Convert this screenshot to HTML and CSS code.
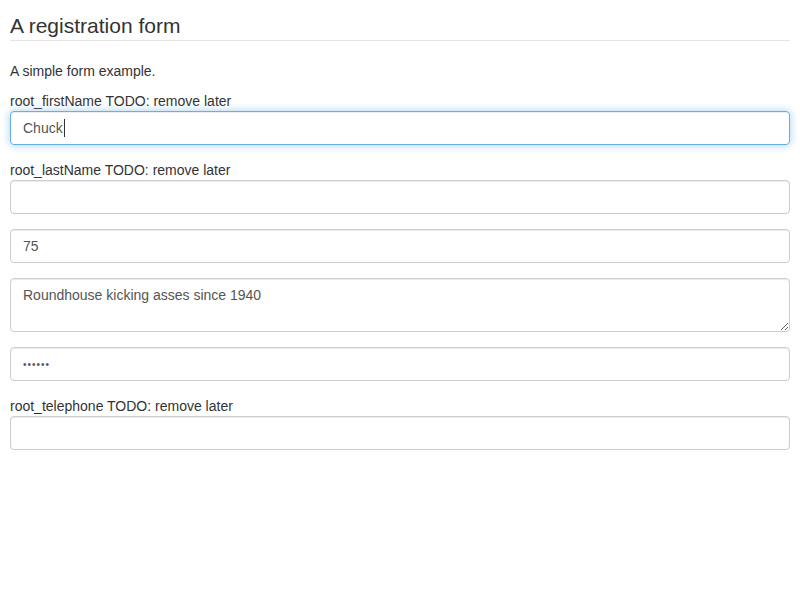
FILE: index.html
```html
<!DOCTYPE html>
<html lang="en">
<head>
<meta charset="utf-8">
<title>A registration form</title>
<link rel="stylesheet" href="styles.css">
</head>
<body>
<form class="form">
  <fieldset class="fieldset">
    <legend class="legend">A registration form</legend>
    <p class="description">A simple form example.</p>
    <div class="form-group">
      <label class="control-label" for="root_firstName">root_firstName TODO: remove later</label>
      <div class="input-wrap">
        <input class="form-control is-focused" id="root_firstName" type="text" value="Chuck">
        <span class="caret" aria-hidden="true"></span>
      </div>
    </div>
    <div class="form-group">
      <label class="control-label" for="root_lastName">root_lastName TODO: remove later</label>
      <input class="form-control" id="root_lastName" type="text" value="">
    </div>
    <div class="form-group">
      <input class="form-control" id="root_age" type="number" value="75">
    </div>
    <div class="form-group">
      <textarea class="form-control textarea" id="root_bio" rows="2">Roundhouse kicking asses since 1940</textarea>
    </div>
    <div class="form-group">
      <input class="form-control password" id="root_password" type="password" value="noneed">
    </div>
    <div class="form-group">
      <label class="control-label" for="root_telephone">root_telephone TODO: remove later</label>
      <input class="form-control" id="root_telephone" type="tel" value="">
    </div>
  </fieldset>
</form>
</body>
</html>
```
FILE: styles.css
```css
* { box-sizing: border-box; }
html, body { margin: 0; padding: 0; background: #fff; }
body {
  padding: 10px;
  font-family: "Liberation Sans", Arial, Helvetica, sans-serif;
  font-size: 14px;
  line-height: 20px;
  color: #333;
}
.form { margin: 0; }
.fieldset { margin: 0; padding: 0; border: 0; min-width: 0; }
.legend {
  display: block;
  width: 100%;
  padding: 1px 0 0;
  margin: 0 0 20px;
  font-size: 21px;
  line-height: 29px;
  color: #333;
  border: 0;
  border-bottom: 1px solid #e5e5e5;
}
.description { margin: 0 0 10px; }
.form-group { margin-bottom: 15px; }
.control-label { display: block; margin: 0; font-weight: normal; }
.input-wrap { position: relative; }
.caret {
  position: absolute;
  left: 54px;
  top: 8px;
  width: 1px;
  height: 18px;
  background: #333;
}
.form-control {
  display: block;
  width: 100%;
  height: 34px;
  padding: 6px 12px;
  margin: 0;
  font-family: inherit;
  font-size: 14px;
  line-height: 20px;
  color: #555;
  background: #fff;
  border: 1px solid #ccc;
  border-radius: 4px;
  box-shadow: inset 0 1px 1px rgba(0,0,0,.075);
  outline: 0;
  -moz-appearance: textfield;
}
.form-control::-webkit-outer-spin-button,
.form-control::-webkit-inner-spin-button { -webkit-appearance: none; margin: 0; }
.textarea { height: 54px; resize: vertical; }
.password { font-size: 10px; letter-spacing: 1px; }
.is-focused, .form-control:focus {
  border-color: #66afe9;
  box-shadow: inset 0 1px 1px rgba(0,0,0,.075), 0 0 8px rgba(102,175,233,.6);
}
```
